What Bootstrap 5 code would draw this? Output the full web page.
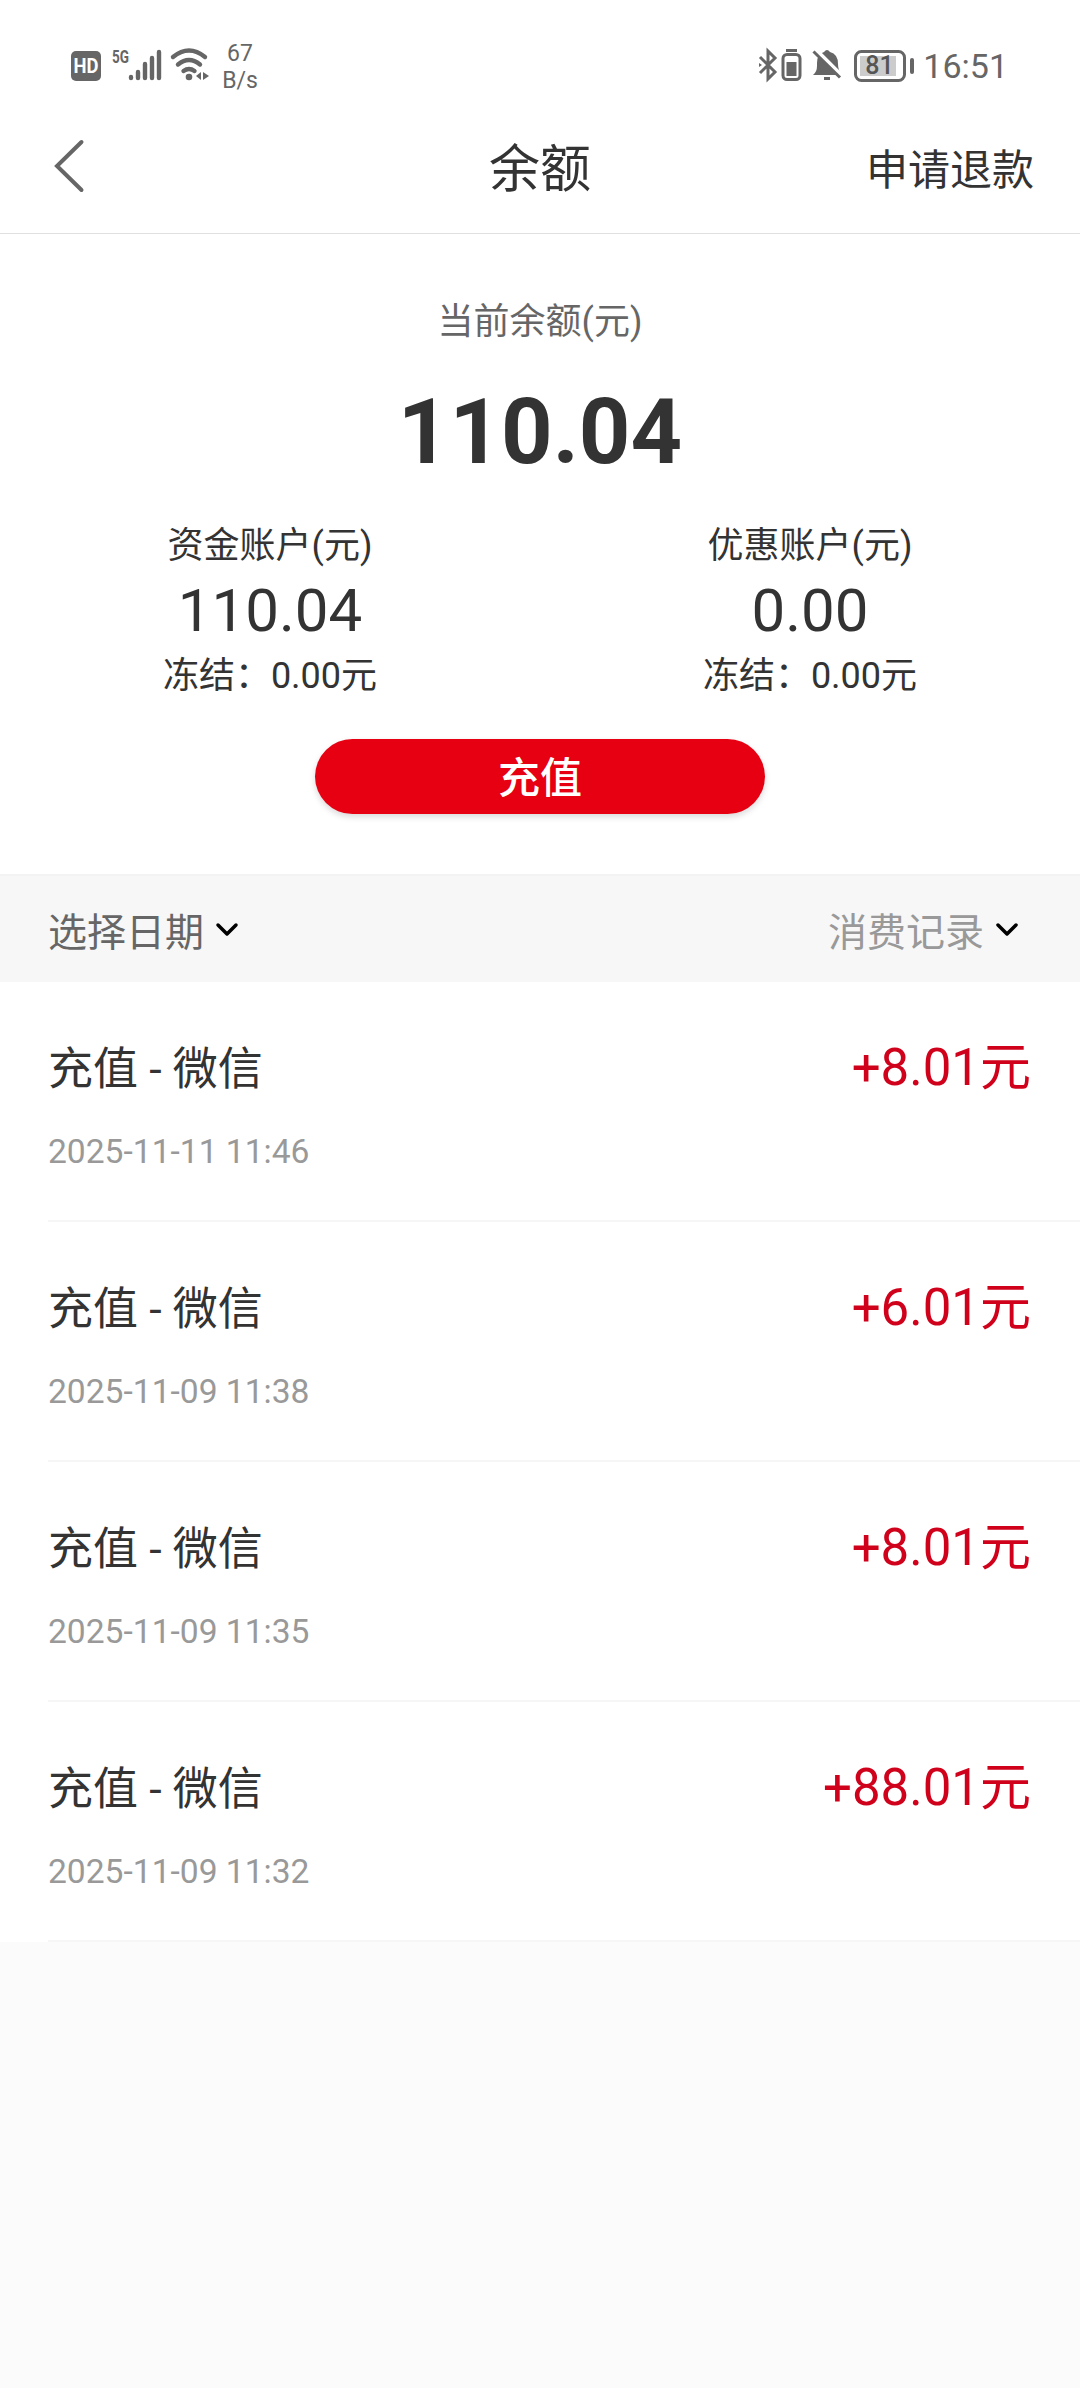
<!DOCTYPE html>
<html lang="zh-CN">
<head>
<meta charset="utf-8">
<meta name="viewport" content="width=device-width, initial-scale=1">
<title>余额</title>
<link href="https://cdn.jsdelivr.net/npm/bootstrap@5.3.0/dist/css/bootstrap.min.css" rel="stylesheet">
<style>
body{font-family:Roboto,"Noto Sans CJK SC",sans-serif;background:#fbfbfb;color:#333;width:1080px;min-height:2388px;line-height:1.2}
.statusbar{height:132px;color:#666;padding-left:70px}
.statusbar svg{display:block;flex:none}
.speed{font-size:23px;line-height:27px;width:50px;margin-top:40px}
.clock{font-size:34px;line-height:40px;margin:46px 72px 0 5px}
.topbar{height:102px;border-bottom:1px solid #e0e0e0}
.back{padding-left:53px}
.ttl{font-size:51px;line-height:60px;padding-top:8px}
.refund{font-size:42px;line-height:50px;padding:14px 46px 0 0}
.summary{height:640px;padding-top:63px}
.lbl{font-size:36px;line-height:50px}
.total{font-size:90px;line-height:106px;margin:33px 0 35px}
.amt{font-size:60px;line-height:70px;margin:5px 0}
.btn-pay{width:450px;height:75px;margin-top:38px;padding:5px 0 0;background:#e60012;color:#fff;font-size:42px;line-height:1;font-weight:500;box-shadow:0 3px 6px rgba(0,0,0,.15)}
.filter{height:108px;background:#f7f7f7;border-top:2px solid #f3f3f3;font-size:39px;padding:8px 60px 0 48px}
.filter svg{display:block;margin-top:-5px}
.pick{gap:10px}
.rec{height:240px;margin-left:48px;padding:56px 49px 0 0;border-bottom:2px solid #f6f6f6}
.rec-name{font-size:45px;line-height:60px;padding-top:2px}
.rec-time{font-size:33.6px;line-height:40px;margin-top:32px;color:#999}
.rec-sum{font-size:51px;line-height:60px;color:#d0021b}
.c6{color:#666}.c9{color:#999}
</style>
</head>
<body>
<div class="statusbar d-flex bg-white">
  <svg width="145" height="132" viewBox="70 0 145 132" fill="#666">
    <rect x="71" y="51" width="30" height="30" rx="5"/>
    <text x="73.500" y="73" font-size="20" font-weight="700" fill="#fff" textLength="25" lengthAdjust="spacingAndGlyphs">HD</text>
    <text x="112" y="63" font-size="18" font-weight="700" textLength="17" lengthAdjust="spacingAndGlyphs">5G</text>
    <g stroke="#666" stroke-width="4.4" stroke-linecap="round">
      <path d="M131 77v1M138 72v6M145 64v14M152 58v20M159 52v26"/>
      <path d="M173 57q16-13 32 0M178 64.500q11-9 22 0M183.500 71q5.500-4 11 0" fill="none"/>
    </g>
    <circle cx="189" cy="77" r="3.3"/>
    <path d="M201 72v8l-5-4zM203 72v8l6-4z"/>
  </svg>
  <div class="speed text-center">67<br>B/s</div>
  <svg class="ms-auto" width="162" height="132" viewBox="757 0 162 132" fill="none" stroke="#666" stroke-width="3">
    <path d="M761 57l15 15-7 7V51l7 7-15 15"/><path d="M760 63l3 2-3 2z" fill="#666" stroke="none"/>
    <rect x="784" y="54.500" width="17" height="25" rx="4"/><path d="M787 50.500h11"/><rect x="787.500" y="62" width="10" height="14" fill="#666" stroke="none"/>
    <path d="M814 75q4-3 4-9v-3q0-9 7-11 3-4 6 0 8 2 8 12 0 7 4 11z" fill="#666" stroke="none"/>
    <path d="M815 48l28 28" stroke="#fff" stroke-width="4"/><path d="M814.500 51.500l26.500 26"/>
    <path d="M825 78.500h6"/>
    <rect x="856.500" y="51.500" width="49" height="29" rx="6"/><rect x="861" y="56" width="36" height="20" fill="#ccc" stroke="none"/>
    <text x="880.500" y="74" font-size="25" font-weight="500" fill="#555" stroke="none" text-anchor="middle">81</text>
    <path d="M913 60v12" stroke-width="4" stroke-linecap="round"/>
  </svg>
  <div class="clock">16:51</div>
</div>
<header class="topbar row g-0 bg-white">
  <div class="col-4 back"><svg width="34" height="68" viewBox="53 0 34 68" fill="none" stroke="#666" stroke-width="4" stroke-linecap="round"><path d="M81.500 10L57 34l24.500 24"/></svg></div>
  <div class="col-4 ttl text-center">余额</div>
  <div class="col-4 refund text-end">申请退款</div>
</header>
<main>
  <section class="summary bg-white text-center d-flex flex-column align-items-center">
    <div class="lbl c6">当前余额(元)</div>
    <div class="total fw-bold">110.04</div>
    <div class="row g-0 w-100">
      <div class="col-6"><div class="lbl">资金账户(元)</div><div class="amt">110.04</div><div class="lbl">冻结：0.00元</div></div>
      <div class="col-6"><div class="lbl">优惠账户(元)</div><div class="amt">0.00</div><div class="lbl">冻结：0.00元</div></div>
    </div>
    <button class="btn btn-pay rounded-pill border-0">充值</button>
  </section>
  <div class="filter d-flex justify-content-between align-items-center">
    <div class="pick d-flex align-items-center c6">选择日期<svg width="26" height="16" fill="none" stroke="#000" stroke-width="3.500" stroke-linecap="round" stroke-linejoin="round"><path d="M4 3l9 9 9-9"/></svg></div>
    <div class="pick d-flex align-items-center c9">消费记录<svg width="26" height="16" fill="none" stroke="#000" stroke-width="3.500" stroke-linecap="round" stroke-linejoin="round"><path d="M4 3l9 9 9-9"/></svg></div>
  </div>
  <ul class="list-unstyled bg-white mb-0">
    <li class="rec"><div class="d-flex justify-content-between"><span class="rec-name">充值 - 微信</span><span class="rec-sum">+8.01元</span></div><div class="rec-time">2025-11-11 11:46</div></li>
    <li class="rec"><div class="d-flex justify-content-between"><span class="rec-name">充值 - 微信</span><span class="rec-sum">+6.01元</span></div><div class="rec-time">2025-11-09 11:38</div></li>
    <li class="rec"><div class="d-flex justify-content-between"><span class="rec-name">充值 - 微信</span><span class="rec-sum">+8.01元</span></div><div class="rec-time">2025-11-09 11:35</div></li>
    <li class="rec"><div class="d-flex justify-content-between"><span class="rec-name">充值 - 微信</span><span class="rec-sum">+88.01元</span></div><div class="rec-time">2025-11-09 11:32</div></li>
  </ul>
</main>
<script src="https://cdn.jsdelivr.net/npm/bootstrap@5.3.0/dist/js/bootstrap.bundle.min.js"></script>
</body>
</html>
